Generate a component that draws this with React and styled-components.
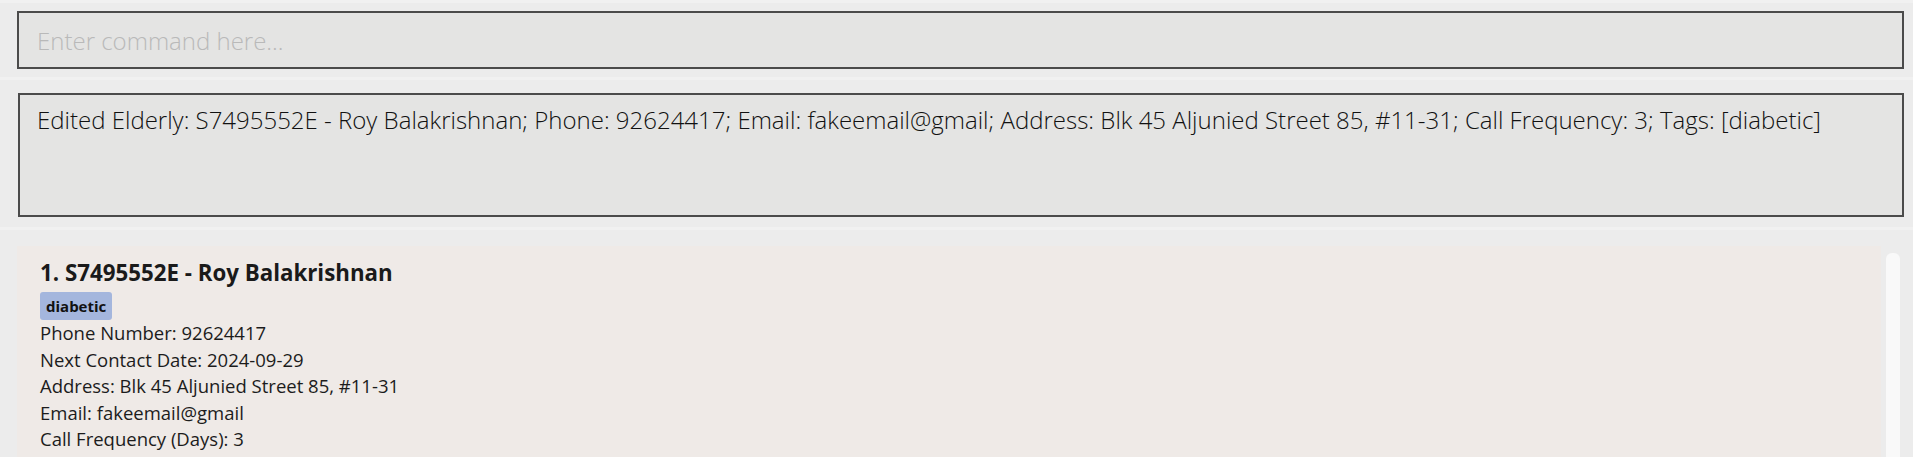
import React from 'react'
import styled, { createGlobalStyle } from 'styled-components'

const GlobalStyle = createGlobalStyle`
html, body {
margin: 0;
padding: 0;
background: #ececec;
overflow: hidden;
}
body {
font-family: "Open Sans", "Noto Sans", sans-serif;
}
`

const Window = styled.div`
width: 1913px;
height: 457px;
display: flex;
flex-direction: column;
background: #ececec;
overflow: hidden;
`

const Section = styled.div`
border-top: 3px solid #f1f1f1;
padding: ${(p) => p.$pad};
${(p) => p.$grow && 'flex: 1; display: flex; min-height: 0;'}
`

const CommandInput = styled.input`
box-sizing: border-box;
display: block;
width: 100%;
height: 58px;
margin: 0;
background: #e4e4e3;
border: 2px solid #4b4b4b;
padding: 0 18px;
font-family: "Open Sans", sans-serif;
font-weight: 300;
font-size: 24px;
color: #111;
outline: none;
&::placeholder {
color: #b9b9b9;
}
`

const ResultBox = styled.div`
box-sizing: border-box;
height: 124px;
background: #e4e4e3;
border: 2px solid #4b4b4b;
padding: 8px 17px;
font-weight: 300;
font-size: 24px;
line-height: 34px;
color: #111;
white-space: nowrap;
overflow: hidden;
`

const ListArea = styled.div`
flex: 1;
display: flex;
gap: 5px;
min-height: 0;
`

const Card = styled.div`
flex: 1;
background: #efeae7;
padding: 11px 23px;
display: flex;
flex-direction: column;
align-items: flex-start;
`

const Title = styled.div`
font-weight: 700;
font-size: 22.3px;
line-height: 32px;
color: #1a1a1a;
`

const Tags = styled.div`
display: flex;
gap: 6px;
margin: 3px 0 0;
`

const Tag = styled.span`
background: #a4b6dd;
border-radius: 3px;
padding: 0 6px;
font-weight: 700;
font-size: 15px;
line-height: 28px;
color: #111;
`

const Detail = styled.div`
font-size: 18.5px;
line-height: 26.5px;
color: #1c1c1c;
`

const ScrollTrack = styled.div`
width: 14px;
padding: 7px 13px 0 0;
`

const ScrollThumb = styled.div`
width: 14px;
height: 100%;
background: #f9f9f9;
border-radius: 6px 6px 0 0;
`

const elderly = {
  nric: 'S7495552E',
  name: 'Roy Balakrishnan',
  phone: '92624417',
  next: '2024-09-29',
  address: 'Blk 45 Aljunied Street 85, #11-31',
  email: 'fakeemail@gmail',
  freq: 3,
  tags: ['diabetic'],
}

export default function App() {
  const e = elderly
  return (
    <Window>
      <GlobalStyle />
      <Section $pad="8px 9px 8px 17px">
        <CommandInput placeholder="Enter command here..." />
      </Section>
      <Section $pad="13px 9px 10px 18px">
        <ResultBox>
          Edited Elderly: {e.nric} - {e.name}; Phone: {e.phone}; Email: {e.email}; Address: {e.address}; Call Frequency: {e.freq}; Tags: [{e.tags.join(', ')}]
        </ResultBox>
      </Section>
      <Section $pad="16px 0 0 17px" $grow>
        <ListArea>
          <Card>
            <Title>1. {e.nric} - {e.name}</Title>
            <Tags>
              {e.tags.map((t) => (
                <Tag key={t}>{t}</Tag>
              ))}
            </Tags>
            <Detail>Phone Number: {e.phone}</Detail>
            <Detail>Next Contact Date: {e.next}</Detail>
            <Detail>Address: {e.address}</Detail>
            <Detail>Email: {e.email}</Detail>
            <Detail>Call Frequency (Days): {e.freq}</Detail>
          </Card>
          <ScrollTrack>
            <ScrollThumb />
          </ScrollTrack>
        </ListArea>
      </Section>
    </Window>
  )
}
